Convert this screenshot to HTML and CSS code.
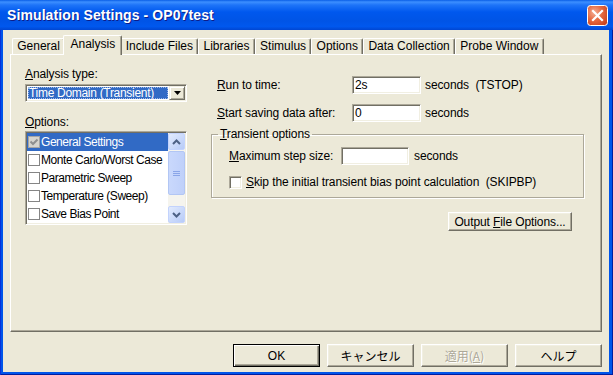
FILE: index.html
```html
<!DOCTYPE html>
<html lang="ja">
<head>
    <meta charset="UTF-8">
    <title>Simulation Settings - OP07test</title>
    <link rel="stylesheet" href="styles.css">
</head>
<body>
<div class="window">
    <div class="titlebar">
        <span class="title">Simulation Settings - OP07test</span>
        <span class="close">
            <svg width="21" height="21" viewBox="0 0 21 21">
                <defs>
                    <radialGradient id="cg" cx="35%" cy="35%" r="80%">
                        <stop offset="0" stop-color="#F5AE94"/>
                        <stop offset="0.5" stop-color="#E4683F"/>
                        <stop offset="1" stop-color="#C8401C"/>
                    </radialGradient>
                </defs>
                <rect x="0.5" y="0.5" width="20" height="20" rx="3" fill="url(#cg)" stroke="#fff"/>
                <path d="M6 6 L15 15 M15 6 L6 15" stroke="#fff" stroke-width="2.2" stroke-linecap="square"/>
            </svg>
        </span>
    </div>

    <div class="client">
        <div class="tabs">
            <div class="tab">General</div>
            <div class="tab active">Analysis</div>
            <div class="tab">Include Files</div>
            <div class="tab">Libraries</div>
            <div class="tab">Stimulus</div>
            <div class="tab">Options</div>
            <div class="tab">Data Collection</div>
            <div class="tab">Probe Window</div>
        </div>

        <div class="panel">
            <div class="col-left">
                <div class="label"><u>A</u>nalysis type:</div>
                <div class="combo">
                    <div class="combo-field"><span class="combo-sel">Time Domain (Transient)</span></div>
                    <div class="combo-btn">
                        <svg width="7" height="4" viewBox="0 0 7 4"><path d="M0 0h7L3.5 4z" fill="#000"/></svg>
                    </div>
                </div>
                <div class="label options-label"><u>O</u>ptions:</div>
                <div class="listbox">
                    <div class="list-items">
                        <div class="item selected">
                            <span class="cb checked">
                                <svg width="10" height="10" viewBox="0 0 10 10"><path d="M1.5 4.5 L4 7 L8.5 2.5" stroke="#8E8F8F" stroke-width="2" fill="none"/></svg>
                            </span>General Settings
                        </div>
                        <div class="item"><span class="cb"></span>Monte Carlo/Worst Case</div>
                        <div class="item"><span class="cb"></span>Parametric Sweep</div>
                        <div class="item"><span class="cb"></span>Temperature (Sweep)</div>
                        <div class="item"><span class="cb"></span>Save Bias Point</div>
                    </div>
                    <div class="vscroll">
                        <div class="sb-btn">
                            <svg width="9" height="6" viewBox="0 0 9 6"><path d="M1 5 L4.5 1.5 L8 5" stroke="#4D6185" stroke-width="2" fill="none"/></svg>
                        </div>
                        <div class="sb-track">
                            <div class="sb-thumb">
                                <svg width="7" height="7" viewBox="0 0 7 7"><path d="M0 1.5h7M0 3.5h7M0 5.5h7" stroke="#8AA5E8" stroke-width="1"/></svg>
                            </div>
                        </div>
                        <div class="sb-btn">
                            <svg width="9" height="6" viewBox="0 0 9 6"><path d="M1 1 L4.5 4.5 L8 1" stroke="#4D6185" stroke-width="2" fill="none"/></svg>
                        </div>
                    </div>
                </div>
            </div>

            <div class="col-right">
                <div class="row first">
                    <span class="lbl"><u>R</u>un to time:</span>
                    <span class="edit">2s</span>
                    <span class="unit">seconds&nbsp;&nbsp;(TSTOP)</span>
                </div>
                <div class="row second">
                    <span class="lbl"><u>S</u>tart saving data after:</span>
                    <span class="edit">0</span>
                    <span class="unit">seconds</span>
                </div>
                <fieldset class="group">
                    <legend><u>T</u>ransient options</legend>
                    <div class="row step">
                        <span class="lbl-inner"><u>M</u>aximum step size:</span>
                        <span class="edit"></span>
                        <span class="unit wide">seconds</span>
                    </div>
                    <div class="row skip">
                        <span class="cb3d"></span>
                        <span><u>S</u>kip the initial transient bias point calculation&nbsp;&nbsp;(SKIPBP)</span>
                    </div>
                </fieldset>
                <div class="btn-line">
                    <button class="btn small">Output <u>F</u>ile Options...</button>
                </div>
            </div>
        </div>

        <div class="buttons">
            <button class="btn default">OK</button>
            <button class="btn jp">キャンセル</button>
            <button class="btn jp disabled">適用(<u>A</u>)</button>
            <button class="btn jp">ヘルプ</button>
        </div>
    </div>
</div>
</body>
</html>
```

FILE: styles.css
```css
body {
    margin: 0;
    font-family: "Liberation Sans", Arial, sans-serif;
    font-size: 12px;
    color: #000;
}
u { text-decoration: underline; text-underline-offset: 1px; }

/* window frame */
.window {
    width: 613px;
    height: 375px;
    display: flex;
    flex-direction: column;
    background: #0055EA;
    box-shadow: inset 1px 0 #0831D9, inset -1px 0 #001EA0, inset 0 -1px #001EA0;
}
.titlebar {
    height: 30px;
    display: flex;
    align-items: center;
    justify-content: space-between;
    padding: 0 5px 0 7px;
    background: linear-gradient(to bottom, #0A5EE6 0, #3D8FFF 2px, #1E74F8 5px, #0058EE 12px, #0054E6 70%, #0058EE 88%, #0046D2 100%);
}
.title {
    color: #fff;
    font-weight: bold;
    font-size: 14px;
    letter-spacing: 0.1px;
    text-shadow: 1px 1px #0F1C88;
}
.close { display: flex; }

.client {
    flex: 1;
    margin: 0 4px 3px 3px;
    padding: 5px 7px 0;
    background: #ECE9D8;
    display: flex;
    flex-direction: column;
}

/* tabs */
.tabs {
    display: flex;
    align-items: flex-end;
    height: 19px;
    padding-left: 2px;
    position: relative;
    z-index: 1;
}
.tab {
    height: 16px;
    box-sizing: border-box;
    padding: 0 4.25px;
    border: 1px solid;
    border-color: #fff #716F64 transparent #fff;
    border-bottom: none;
    border-radius: 2px 2px 0 0;
    box-shadow: inset -1px 0 #ACA899;
    background: #ECE9D8;
    line-height: 15px;
    white-space: nowrap;
}
.tab.active {
    height: 20px;
    margin: 0 -2px -1px;
    padding: 0 6.25px;
    line-height: 16px;
    position: relative;
    z-index: 2;
}

.panel {
    height: 278px;
    box-sizing: border-box;
    border: 1px solid;
    border-color: #fff #716F64 #716F64 #fff;
    box-shadow: inset -1px -1px #ACA899;
    padding: 12px 14px;
    display: flex;
    letter-spacing: -0.1px;
}

/* left column */
.col-left { width: 162px; }
.label { line-height: 14px; height: 14px; }
.options-label { margin-top: 13px; }

.combo, .listbox {
    box-sizing: border-box;
    border: 1px solid;
    border-color: #ACA899 #fff #fff #ACA899;
    box-shadow: inset 1px 1px #716F64, inset -1px -1px #F1EFE2;
    background: #fff;
    padding: 1px;
    display: flex;
}
.combo {
    margin-top: 3px;
    height: 18px;
}
.combo-field {
    flex: 1;
    padding: 1px;
    display: flex;
}
.combo-sel {
    flex: 1;
    background: #316AC5;
    color: #fff;
    line-height: 12px;
    padding-left: 1px;
    white-space: nowrap;
    letter-spacing: -0.3px;
    outline: 1px dotted #9EB8E6;
    outline-offset: -1px;
}
.combo-btn {
    width: 16px;
    box-sizing: border-box;
    background: #ECE9D8;
    border: 1px solid;
    border-color: #F1EFE2 #716F64 #716F64 #F1EFE2;
    box-shadow: inset 1px 1px #fff, inset -1px -1px #ACA899;
    display: flex;
    align-items: center;
    justify-content: center;
}

.listbox {
    margin-top: 2px;
    height: 94px;
}
.list-items { flex: 1; overflow: hidden; }
.item {
    height: 18px;
    line-height: 18px;
    display: flex;
    align-items: center;
    white-space: nowrap;
    padding-left: 1px;
    letter-spacing: -0.45px;
}
.item.selected {
    background: #316AC5;
    color: #fff;
}
.cb {
    width: 10px;
    height: 10px;
    border: 1px solid #858585;
    background: #fff;
    display: flex;
    align-items: center;
    justify-content: center;
    margin-right: 1px;
}
.cb.checked {
    background: #D5D4CE;
    border-color: #A4A4A4;
}

.vscroll {
    width: 17px;
    display: flex;
    flex-direction: column;
    background: #F5F4EE;
}
.sb-btn {
    height: 17px;
    box-sizing: border-box;
    border: 1px solid #C3D3FD;
    border-radius: 2px;
    background: linear-gradient(135deg, #E2EBFE, #B7CBF8);
    display: flex;
    align-items: center;
    justify-content: center;
}
.sb-track {
    flex: 1;
    padding: 1px 0 11px;
    display: flex;
}
.sb-thumb {
    flex: 1;
    box-sizing: border-box;
    border: 1px solid #B2C6F4;
    border-radius: 2px;
    background: linear-gradient(to right, #C9D8FC, #BFD0FA);
    display: flex;
    align-items: center;
    justify-content: center;
}

/* right column */
.col-right {
    margin-left: 24px;
    width: 373px;
}
.row {
    display: flex;
    align-items: center;
    height: 18px;
    white-space: nowrap;
}
.row.first { margin-top: 9px; }
.row.second { margin-top: 10px; }
.lbl {
    width: 135px;
    margin-left: 6px;
}
.lbl-inner {
    width: 112px;
    margin-left: 17px;
}
.edit {
    width: 69px;
    height: 18px;
    box-sizing: border-box;
    border: 1px solid;
    border-color: #ACA899 #fff #fff #ACA899;
    box-shadow: inset 1px 1px #716F64, inset -1px -1px #F1EFE2;
    background: #fff;
    padding-left: 2px;
    line-height: 16px;
}
.step .edit { width: 68px; }
.unit { margin-left: 4px; }
.unit.wide { margin-left: 5px; }

.group {
    margin: 5px 0 0;
    padding: 0 0 6px;
    border: 1px solid #ACA899;
    box-shadow: inset 1px 1px #fff, 1px 1px #fff;
}
.group legend {
    margin-left: 6px;
    padding: 0 2px;
    line-height: 14px;
}
.row.step { margin-top: 6px; }
.row.skip { margin-top: 8px; }
.cb3d {
    width: 13px;
    height: 13px;
    box-sizing: border-box;
    margin: 0 4px 0 17px;
    border: 1px solid;
    border-color: #ACA899 #fff #fff #ACA899;
    box-shadow: inset 1px 1px #716F64, inset -1px -1px #F1EFE2;
    background: #fff;
}

.btn-line {
    margin-top: 14px;
    padding-left: 237px;
}

/* buttons */
.btn {
    font-family: "Liberation Sans", Arial, sans-serif;
    font-size: 12px;
    color: #000;
    background: #ECE9D8;
    box-sizing: border-box;
    border: 1px solid;
    border-color: #fff #716F64 #716F64 #fff;
    box-shadow: inset -1px -1px #ACA899, inset 1px 1px #F1EFE2;
    padding: 0;
    margin: 0;
    white-space: nowrap;
}
.btn.small {
    width: 124px;
    height: 19px;
    letter-spacing: -0.1px;
}
.buttons {
    margin-top: 12px;
    display: flex;
    justify-content: flex-end;
    gap: 7px;
}
.buttons .btn {
    width: 87px;
    height: 23px;
}
.btn.default {
    border-color: #000;
    box-shadow: inset 1px 1px #fff, inset -1px -1px #716F64, inset -2px -2px #ACA899;
}
.btn.jp {
    font-family: "Noto Sans CJK JP", "Liberation Sans", sans-serif;
    font-size: 12px;
}
.btn.disabled {
    color: #ACA899;
    text-shadow: 1px 1px #fff;
}
```
